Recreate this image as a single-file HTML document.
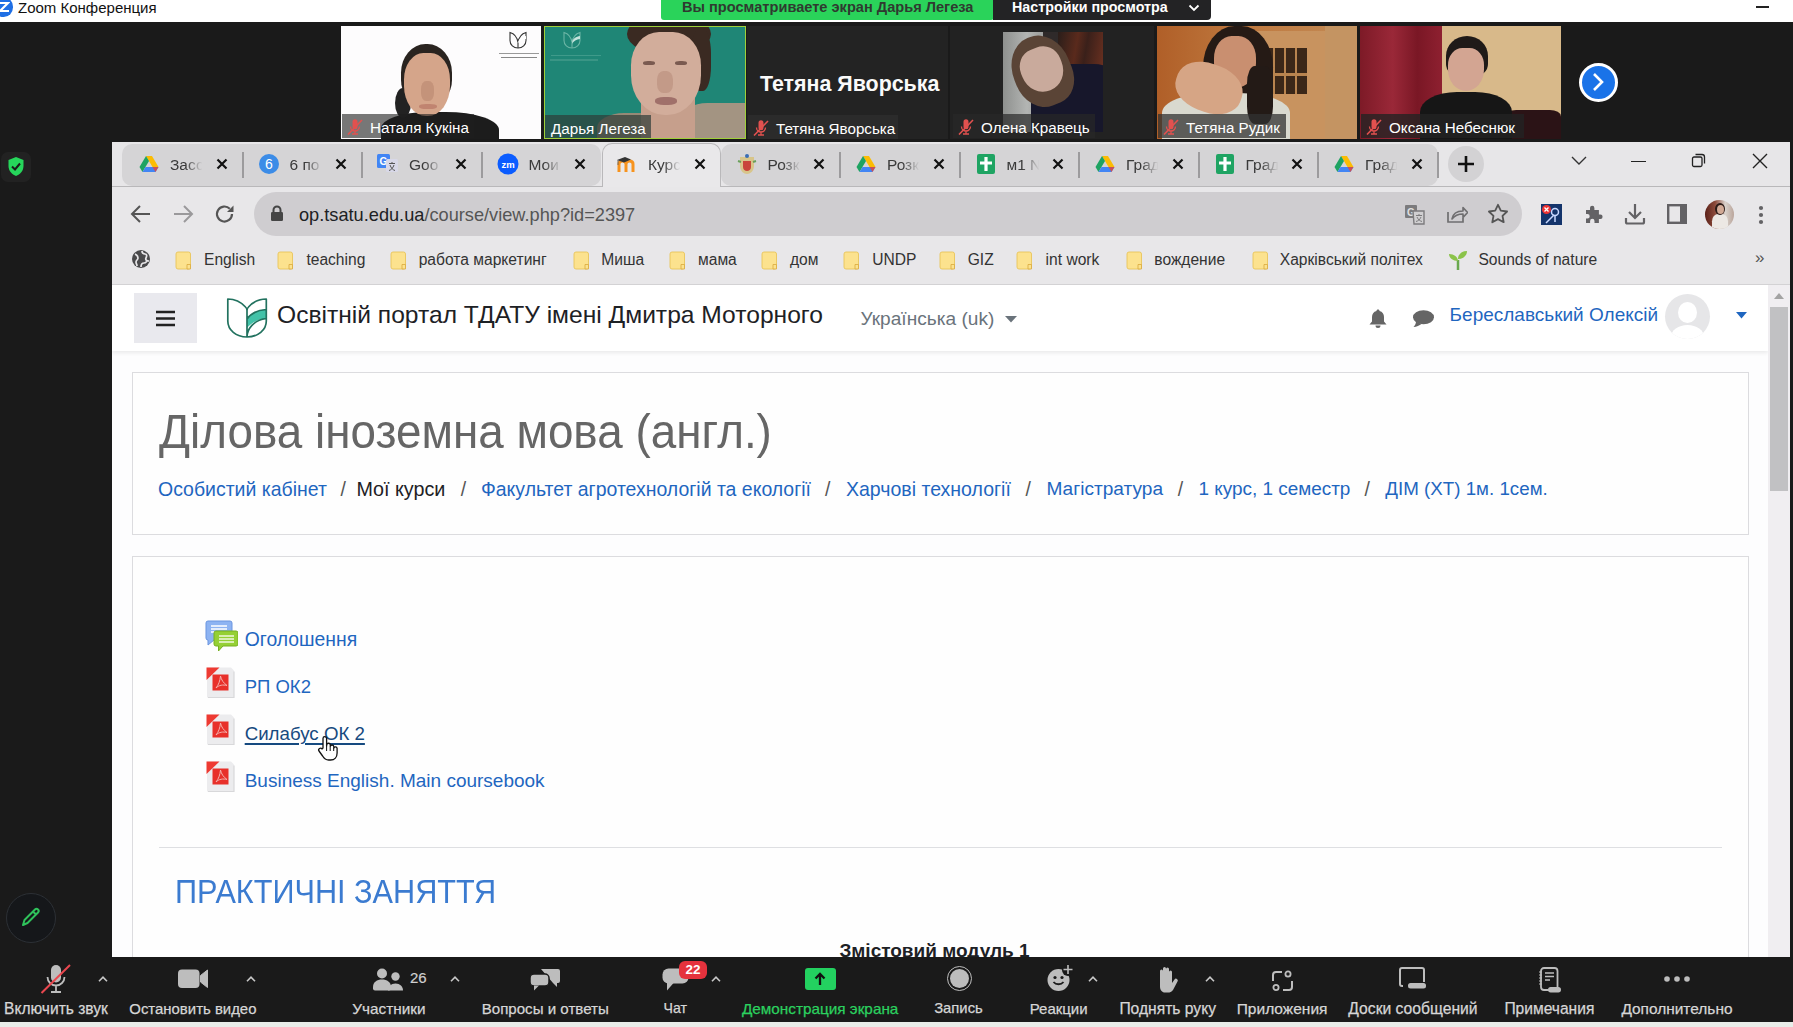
<!DOCTYPE html>
<html><head><meta charset="utf-8">
<style>
*{box-sizing:border-box;margin:0;padding:0}
html,body{width:1793px;height:1027px;overflow:hidden;background:#1a1a1a;font-family:"Liberation Sans",sans-serif}
.a{position:absolute}
.nw{white-space:nowrap}
/* title bar */
#title{left:0;top:0;width:1793px;height:22px;background:#fff}
/* thumbnails */
.tile{top:26px;height:113px;width:201px;overflow:hidden;background:#232323}
.badge{height:24px;color:#fff;font-size:15.2px;line-height:24px;padding:2px 6px 0 26px}
.badge.nomic{padding-left:6px}
.mic{left:5px;top:5px;width:16px;height:16px}
/* browser */
#browser{left:112px;top:142px;width:1678px;height:815px;background:#e8e7e9;overflow:hidden}
.tab{top:0;height:43px;width:120px}
.tabtxt{top:14px;font-size:15.5px;color:#3a3a3a;overflow:hidden;width:34px;white-space:nowrap}
.tabx{top:14px;width:16px;height:16px}
.sep{top:10px;width:2px;height:26px;background:#9c9b9d}
.bm{top:108.5px;font-size:15.6px;color:#333;white-space:nowrap}
.fold{top:109px;width:17px;height:18px}
/* moodle */
#page{left:0;top:143px;width:1678px;height:672px;background:linear-gradient(90deg,#fdfdfe 1656px,#f0eef1 1656px);overflow:hidden}
.link{color:#1f66c0}
.card{background:#fefefe;border:1px solid #dcdcdf}
/* zoom toolbar */
#tb{left:0;top:957px;width:1793px;height:65px;background:#1a1a1a}
.lbl{top:42px;font-size:15.5px;color:#d0d0d0;white-space:nowrap}
</style></head>
<body>
<div id="title" class="a">
  <div class="a" style="left:-6px;top:-3px;width:18.5px;height:19.5px;border-radius:50%;background:#1f6fe5"></div><svg class="a" style="left:-2px;top:1px" width="12" height="12" viewBox="0 0 12 12"><path d="M1 2h9L2 10h9" stroke="#fff" stroke-width="2.2" fill="none"/></svg>
  <div class="a nw" style="left:18px;top:-1px;font-size:15px;color:#111">Zoom Конференция</div>
  <div class="a" style="left:1756px;top:6px;width:13px;height:1.5px;background:#222"></div>
</div>
<div class="a" style="left:661px;top:0;width:333px;height:19.5px;background:#2ad35a;border-radius:0 0 3px 3px"></div>
<div class="a nw" style="left:682px;top:-1px;font-size:14.6px;font-weight:bold;color:#2f3a30">Вы просматриваете экран Дарья Легеза</div>
<div class="a" style="left:993px;top:0;width:218px;height:19.5px;background:#232325;border-radius:0 0 4px 0"></div>
<div class="a nw" style="left:1012px;top:-1px;font-size:14.3px;font-weight:bold;color:#fff">Настройки просмотра</div>
<svg class="a" style="left:1188px;top:4px" width="12" height="8" viewBox="0 0 12 8"><path d="M1.5 1.5l4.5 4.5 4.5-4.5" stroke="#fff" stroke-width="1.8" fill="none"/></svg>

<!-- THUMBS -->


<div class="a tile" style="left:341px;width:200px;background:#fdfcfd">
  <div class="a" style="left:40px;top:86px;width:118px;height:40px;border-radius:40% 45% 0 0;background:#1c1c1c;"></div>
  <div class="a" style="left:54px;top:62px;width:16px;height:30px;border-radius:50%;background:#222;"></div>
  <div class="a" style="left:60px;top:18px;width:51px;height:60px;border-radius:48% 48% 40% 40%;background:#2a2420;"></div>
  <div class="a" style="left:63px;top:27px;width:46px;height:63px;border-radius:42% 42% 48% 48%;background:#d5a58a;"></div>
  <div class="a" style="left:80px;top:55px;width:13px;height:20px;border-radius:40%;background:#c4937a;"></div>
  <div class="a" style="left:78px;top:78px;width:18px;height:5px;border-radius:40%;background:#c08470;"></div>
  <div class="a" style="left:167px;top:5px"><svg width="20" height="18" viewBox="0 0 20 18"><path d="M2 1.5c4 1 7 4 8 10 1-6 4-9 8-10v8c0 4.5-3.5 7.5-8 7.5S2 14 2 9.5z" fill="none" stroke="#333" stroke-width="1.1"/><path d="M10 11.5c1-4 4-6 8-6.5v3c-3.5.5-6.5 2-8 5z" fill="#fff"/><path d="M10 11.5V17" stroke="#333" stroke-width="1.1"/></svg></div>
  <div class="a" style="left:158px;top:27px;width:40px;height:1px;background:#999"></div>
  <div class="a" style="left:160px;top:31px;width:36px;height:1px;background:#888"></div>
  <div class="a badge nw" style="left:1px;top:88px;width:132px;padding-left:28px;background:rgba(30,30,30,.6)"><svg class="a mic" viewBox="0 0 16 16"><path d="M5.5 2.8a2.5 2.5 0 0 1 5 0v5a2.5 2.5 0 0 1-5 0z" fill="#e2514f"/><path d="M3.5 7.5a4.5 4.5 0 0 0 9 0M8 12v2.5M5 15h6" stroke="#e2514f" stroke-width="1.3" fill="none"/><path d="M1 15.5L15 1" stroke="#e2514f" stroke-width="1.6"/></svg>Наталя Кукіна</div>
</div>
<div class="a tile" style="left:544px;width:202px;background:#1f8676;border:1.5px solid #9fd03a">
  <div class="a" style="left:136px;top:76px;width:66px;height:40px;border-radius:40% 0 0 0;background:#a39482"></div>
  <div class="a" style="left:52px;top:86px;width:54px;height:30px;border-radius:50% 20% 0 0;background:#978976"></div>
  <div class="a" style="left:96px;top:66px;width:54px;height:50px;border-radius:10%;background:#c69f8c"></div>
  <div class="a" style="left:82px;top:-14px;width:84px;height:42px;border-radius:50%;background:#3a2a22"></div>
  <div class="a" style="left:146px;top:2px;width:20px;height:62px;border-radius:40%;background:#3a2a22"></div>
  <div class="a" style="left:86px;top:5px;width:70px;height:83px;border-radius:40% 40% 48% 48%;background:#d2ad9b"></div>
  <div class="a" style="left:112px;top:44px;width:16px;height:22px;border-radius:40%;background:#c39a88"></div>
  <div class="a" style="left:110px;top:70px;width:22px;height:8px;border-radius:40%;background:#a0706a"></div>
  <div class="a" style="left:98px;top:34px;width:12px;height:4px;border-radius:40%;background:#7a5a50"></div>
  <div class="a" style="left:130px;top:34px;width:12px;height:4px;border-radius:40%;background:#7a5a50"></div>
  <div class="a" style="left:17px;top:4px"><svg width="20" height="18" viewBox="0 0 20 18"><path d="M2 1.5c4 1 7 4 8 10 1-6 4-9 8-10v8c0 4.5-3.5 7.5-8 7.5S2 14 2 9.5z" fill="none" stroke="#6bb5a5" stroke-width="1.1"/><path d="M10 11.5c1-4 4-6 8-6.5v3c-3.5.5-6.5 2-8 5z" fill="#c5e3dc"/><path d="M10 11.5V17" stroke="#6bb5a5" stroke-width="1.1"/></svg></div>
  <div class="a" style="left:6px;top:28px;width:50px;height:1px;background:#3f9a8a"></div>
  <div class="a" style="left:5px;top:32px;width:48px;height:2px;background:#3a9585"></div>
  <div class="a badge nw" style="left:0px;top:88px;width:106px;padding-left:6px;background:rgba(45,60,55,.7)">Дарья Легеза</div>
</div>
<div class="a tile" style="left:747px;width:203px;background:#232323;border-right:2px solid #1a1a1a">
  <div class="a nw" style="left:13px;top:45.5px;font-size:21.4px;font-weight:bold;color:#fafafa">Тетяна Яворська</div>
  <div class="a badge nw" style="left:1px;top:89px;width:150px;padding-left:28px;background:#2b2b2b"><svg class="a mic" viewBox="0 0 16 16"><path d="M5.5 2.8a2.5 2.5 0 0 1 5 0v5a2.5 2.5 0 0 1-5 0z" fill="#e2514f"/><path d="M3.5 7.5a4.5 4.5 0 0 0 9 0M8 12v2.5M5 15h6" stroke="#e2514f" stroke-width="1.3" fill="none"/><path d="M1 15.5L15 1" stroke="#e2514f" stroke-width="1.6"/></svg>Тетяна Яворська</div>
</div>
<div class="a tile" style="left:950px;width:204px;background:#222">
  <div class="a" style="left:53px;top:6px;width:100px;height:100px;background:#2f2a2a;overflow:hidden">
    <div class="a" style="left:0;top:0;width:40px;height:100px;background:linear-gradient(90deg,#8e908e,#b3b5b3 60%,#9c9e9c)"></div>
    <div class="a" style="left:55px;top:0;width:45px;height:38px;background:linear-gradient(100deg,#2a1e1a,#5a2a1c 40%,#3a201a 60%,#6a3020)"></div>
    <div class="a" style="left:28px;top:32px;width:90px;height:80px;border-radius:45% 30% 0 0;background:#17172b"></div>
    <div class="a" style="left:10px;top:3px;width:58px;height:72px;border-radius:48% 48% 40% 45%;background:#5a4436;transform:rotate(-22deg)"></div>
    <div class="a" style="left:18px;top:15px;width:42px;height:45px;border-radius:42% 42% 50% 50%;background:#c9aa9c;transform:rotate(-22deg)"></div>
  </div>
  <div class="a badge nw" style="left:3px;top:88px;width:142px;padding-left:28px;background:rgba(40,40,40,.7)"><svg class="a mic" viewBox="0 0 16 16"><path d="M5.5 2.8a2.5 2.5 0 0 1 5 0v5a2.5 2.5 0 0 1-5 0z" fill="#e2514f"/><path d="M3.5 7.5a4.5 4.5 0 0 0 9 0M8 12v2.5M5 15h6" stroke="#e2514f" stroke-width="1.3" fill="none"/><path d="M1 15.5L15 1" stroke="#e2514f" stroke-width="1.6"/></svg>Олена Кравець</div>
</div>
<div class="a tile" style="left:1157px;width:200px;background:linear-gradient(90deg,#b05f28,#c07a40 45%,#c28a55)">
  <div class="a" style="left:100px;top:5px;width:68px;height:110px;background:#c8935f"></div>
  <div class="a" style="left:106px;top:22px;width:44px;height:46px;background:#3b2718;background-image:linear-gradient(90deg,transparent 22%,#b8844f 22% 27%,transparent 27% 47%,#b8844f 47% 52%,transparent 52% 72%,#b8844f 72% 77%,transparent 77%),linear-gradient(0deg,transparent 40%,#b8844f 40% 46%,transparent 46%)"></div>
  <div class="a" style="left:168px;top:0;width:32px;height:113px;background:#c49462"></div>
  <div class="a" style="left:46px;top:0px;width:70px;height:92px;border-radius:45% 45% 20% 20%;background:#251a15;"></div>
  <div class="a" style="left:57px;top:10px;width:42px;height:52px;border-radius:42% 42% 48% 48%;background:#c98f70;"></div>
  <div class="a" style="left:5px;top:67px;width:128px;height:50px;border-radius:40% 40% 0 0;background:#d9d9cf;"></div>
  <div class="a" style="left:18px;top:38px;width:68px;height:48px;border-radius:45%;background:#d6a585;transform:rotate(20deg)"></div>
  <div class="a" style="left:90px;top:40px;width:26px;height:58px;border-radius:30%;background:#231a16;"></div>
  <div class="a badge nw" style="left:1px;top:88px;width:128px;padding-left:28px;background:rgba(50,50,50,.75)"><svg class="a mic" viewBox="0 0 16 16"><path d="M5.5 2.8a2.5 2.5 0 0 1 5 0v5a2.5 2.5 0 0 1-5 0z" fill="#e2514f"/><path d="M3.5 7.5a4.5 4.5 0 0 0 9 0M8 12v2.5M5 15h6" stroke="#e2514f" stroke-width="1.3" fill="none"/><path d="M1 15.5L15 1" stroke="#e2514f" stroke-width="1.6"/></svg>Тетяна Рудик</div>
</div>
<div class="a tile" style="left:1360px;width:201px;background:#d8b98a">
  <div class="a" style="left:0;top:0;width:82px;height:113px;background:linear-gradient(90deg,#7d1a27,#9a2838 40%,#7a1725 70%,#8e2030)"></div>
  <div class="a" style="left:145px;top:84px;width:56px;height:32px;border-radius:20% 20% 0 0;background:#2b1316;"></div>
  <div class="a" style="left:60px;top:66px;width:92px;height:50px;border-radius:40% 40% 0 0;background:#161616;"></div>
  <div class="a" style="left:86px;top:10px;width:42px;height:40px;border-radius:50% 50% 30% 30%;background:#1f1a18;"></div>
  <div class="a" style="left:88px;top:22px;width:36px;height:43px;border-radius:40% 40% 50% 50%;background:#d3a592;"></div>
  <div class="a badge nw" style="left:1px;top:88px;width:163px;padding-left:28px;background:rgba(35,35,35,.8)"><svg class="a mic" viewBox="0 0 16 16"><path d="M5.5 2.8a2.5 2.5 0 0 1 5 0v5a2.5 2.5 0 0 1-5 0z" fill="#e2514f"/><path d="M3.5 7.5a4.5 4.5 0 0 0 9 0M8 12v2.5M5 15h6" stroke="#e2514f" stroke-width="1.3" fill="none"/><path d="M1 15.5L15 1" stroke="#e2514f" stroke-width="1.6"/></svg>Оксана Небеснюк</div>
</div>
<div class="a" style="left:1578.5px;top:62.5px;width:39px;height:39px;border-radius:50%;background:#1a73e8;border:3px solid #fff"></div>
<svg class="a" style="left:1590px;top:72px" width="16" height="20" viewBox="0 0 16 20"><path d="M4 2l8 8-8 8" stroke="#fff" stroke-width="2.6" fill="none"/></svg>
<div class="a" style="left:1px;top:152px;width:29.5px;height:30px;border-radius:7px;background:#222"></div>
<svg class="a" style="left:7px;top:156px" width="18" height="21" viewBox="0 0 18 21"><path d="M9 1l7.5 3v6c0 5-3.5 8.5-7.5 10C5 18.5 1.5 15 1.5 10V4z" fill="#26d65b"/><path d="M5 10.5l3 3 5-6" stroke="#1a1a1a" stroke-width="2" fill="none"/></svg>
<div class="a" style="left:6px;top:892.5px;width:50px;height:50px;border-radius:50%;background:#15171a;border:1.5px solid #2c3035"></div>
<svg class="a" style="left:19px;top:905px" width="24" height="24" viewBox="0 0 24 24"><path d="M4 20l1.5-5L16 4.5a2.1 2.1 0 0 1 3 3L8.5 18z M14 6.5l3 3" stroke="#2fc25b" stroke-width="2" fill="none" stroke-linejoin="round"/></svg>


<!-- BROWSER -->
<div id="browser" class="a">
  <div class="a" style="left:0;top:0;width:1678px;height:44px;background:#e7e6e8"></div>
<div class="a" style="left:10px;top:2px;width:479px;height:41.5px;background:#d5d4d6;border-radius:10px"></div><div class="a" style="left:609px;top:2px;width:717px;height:41.5px;background:#d5d4d6;border-radius:10px"></div><div class="a" style="left:490px;top:1px;width:118.5px;height:45px;background:#e9e8ea;border:1px solid #b9b8ba;border-bottom:none;border-radius:10px 10px 0 0"></div>
<div class="a sep" style="left:129.5px"></div>
<div class="a" style="left:26.0px;top:11px;width:22px;height:22px;display:flex;align-items:center;justify-content:center"><svg width="20" height="18" viewBox="0 0 20 18"><path d="M7 1h6l6.5 11h-6z" fill="#fbbc04"/><path d="M7 1L0.5 12l3 5L10 6z" fill="#1ea362"/><path d="M3.5 17h13l3-5h-13z" fill="#4285f4"/><path d="M16.5 17l3-5h-6z" fill="#ea4335" opacity=".8"/></svg></div>
<div class="a tabtxt" style="left:58.0px;-webkit-mask-image:linear-gradient(90deg,#000 45%,transparent 95%)">Засо</div>
<svg class="a tabx" style="left:101.5px" viewBox="0 0 16 16"><path d="M3.5 3.5l9 9M12.5 3.5l-9 9" stroke="#111" stroke-width="2.2"/></svg>
<div class="a sep" style="left:249.0px"></div>
<div class="a" style="left:145.5px;top:11px;width:22px;height:22px;display:flex;align-items:center;justify-content:center"><svg width="20" height="20" viewBox="0 0 20 20"><circle cx="10" cy="10" r="10" fill="#3c8ce7"/><text x="10" y="15" text-anchor="middle" font-family="Liberation Sans" font-size="14" fill="#fff">6</text></svg></div>
<div class="a tabtxt" style="left:177.5px;-webkit-mask-image:linear-gradient(90deg,#000 45%,transparent 95%)">6 по</div>
<svg class="a tabx" style="left:221.0px" viewBox="0 0 16 16"><path d="M3.5 3.5l9 9M12.5 3.5l-9 9" stroke="#111" stroke-width="2.2"/></svg>
<div class="a sep" style="left:368.5px"></div>
<div class="a" style="left:265.0px;top:11px;width:22px;height:22px;display:flex;align-items:center;justify-content:center"><svg width="22" height="20" viewBox="0 0 22 20"><rect x="0" y="0" width="13" height="14" rx="1.5" fill="#4285f4"/><text x="6.5" y="11" text-anchor="middle" font-family="Liberation Sans" font-weight="bold" font-size="10" fill="#fff">G</text><rect x="9" y="5" width="12" height="13" rx="1.5" fill="#d8d8e8"/><path d="M12 9.5h6M15 8v1.5M13 11c1 3 3 5 5 5.5M17 11c-1 3-3 5-5 5.5" stroke="#555" stroke-width="1" fill="none"/></svg></div>
<div class="a tabtxt" style="left:297.0px;-webkit-mask-image:linear-gradient(90deg,#000 45%,transparent 95%)">Goo</div>
<svg class="a tabx" style="left:340.5px" viewBox="0 0 16 16"><path d="M3.5 3.5l9 9M12.5 3.5l-9 9" stroke="#111" stroke-width="2.2"/></svg>
<div class="a" style="left:384.5px;top:11px;width:22px;height:22px;display:flex;align-items:center;justify-content:center"><svg width="22" height="22" viewBox="0 0 22 22"><circle cx="11" cy="11" r="10.5" fill="#0b5cff"/><text x="11" y="14.5" text-anchor="middle" font-family="Liberation Sans" font-weight="bold" font-size="9.5" fill="#fff">zm</text></svg></div>
<div class="a tabtxt" style="left:416.5px;-webkit-mask-image:linear-gradient(90deg,#000 45%,transparent 95%)">Мои</div>
<svg class="a tabx" style="left:460.0px" viewBox="0 0 16 16"><path d="M3.5 3.5l9 9M12.5 3.5l-9 9" stroke="#111" stroke-width="2.2"/></svg>

<div class="a" style="left:504.0px;top:11px;width:22px;height:22px;display:flex;align-items:center;justify-content:center"><svg width="22" height="18" viewBox="0 0 22 18"><path d="M3 17V9c0-2 1.5-3 3.5-3S10 7 10 9v8M10 9c0-2 1.5-3 3.5-3S17 7 17 9v8" stroke="#f7931e" stroke-width="3" fill="none"/><path d="M1 5l8-3 6 2.5-7 3z" fill="#333"/><path d="M2 5v5" stroke="#555" stroke-width=".8"/></svg></div>
<div class="a tabtxt" style="left:536.0px;-webkit-mask-image:linear-gradient(90deg,#000 45%,transparent 95%)">Курс</div>
<svg class="a tabx" style="left:579.5px" viewBox="0 0 16 16"><path d="M3.5 3.5l9 9M12.5 3.5l-9 9" stroke="#111" stroke-width="2.2"/></svg>
<div class="a sep" style="left:727.0px"></div>
<div class="a" style="left:623.5px;top:11px;width:22px;height:22px;display:flex;align-items:center;justify-content:center"><svg width="20" height="22" viewBox="0 0 20 22"><path d="M3 4h14v9c0 5-4 8-7 8s-7-3-7-8z" fill="#d8c58a"/><path d="M6 8h8v6c0 2.5-2 4-4 4s-4-1.5-4-4z" fill="#c9463b"/><circle cx="10" cy="3" r="2" fill="#3a6db3"/><path d="M1 8l3 1M19 8l-3 1" stroke="#6aa05a" stroke-width="2"/></svg></div>
<div class="a tabtxt" style="left:655.5px;-webkit-mask-image:linear-gradient(90deg,#000 45%,transparent 95%)">Розк</div>
<svg class="a tabx" style="left:699.0px" viewBox="0 0 16 16"><path d="M3.5 3.5l9 9M12.5 3.5l-9 9" stroke="#111" stroke-width="2.2"/></svg>
<div class="a sep" style="left:846.5px"></div>
<div class="a" style="left:743.0px;top:11px;width:22px;height:22px;display:flex;align-items:center;justify-content:center"><svg width="20" height="18" viewBox="0 0 20 18"><path d="M7 1h6l6.5 11h-6z" fill="#fbbc04"/><path d="M7 1L0.5 12l3 5L10 6z" fill="#1ea362"/><path d="M3.5 17h13l3-5h-13z" fill="#4285f4"/><path d="M16.5 17l3-5h-6z" fill="#ea4335" opacity=".8"/></svg></div>
<div class="a tabtxt" style="left:775.0px;-webkit-mask-image:linear-gradient(90deg,#000 45%,transparent 95%)">Розк</div>
<svg class="a tabx" style="left:818.5px" viewBox="0 0 16 16"><path d="M3.5 3.5l9 9M12.5 3.5l-9 9" stroke="#111" stroke-width="2.2"/></svg>
<div class="a sep" style="left:966.0px"></div>
<div class="a" style="left:862.5px;top:11px;width:22px;height:22px;display:flex;align-items:center;justify-content:center"><svg width="20" height="22" viewBox="0 0 20 22"><rect x="1" y="1" width="18" height="20" rx="2" fill="#1fa463"/><path d="M10 4v14M4 10h12" stroke="#fff" stroke-width="3.2"/></svg></div>
<div class="a tabtxt" style="left:894.5px;-webkit-mask-image:linear-gradient(90deg,#000 45%,transparent 95%)">м1 N</div>
<svg class="a tabx" style="left:938.0px" viewBox="0 0 16 16"><path d="M3.5 3.5l9 9M12.5 3.5l-9 9" stroke="#111" stroke-width="2.2"/></svg>
<div class="a sep" style="left:1085.5px"></div>
<div class="a" style="left:982.0px;top:11px;width:22px;height:22px;display:flex;align-items:center;justify-content:center"><svg width="20" height="18" viewBox="0 0 20 18"><path d="M7 1h6l6.5 11h-6z" fill="#fbbc04"/><path d="M7 1L0.5 12l3 5L10 6z" fill="#1ea362"/><path d="M3.5 17h13l3-5h-13z" fill="#4285f4"/><path d="M16.5 17l3-5h-6z" fill="#ea4335" opacity=".8"/></svg></div>
<div class="a tabtxt" style="left:1014.0px;-webkit-mask-image:linear-gradient(90deg,#000 45%,transparent 95%)">Град</div>
<svg class="a tabx" style="left:1057.5px" viewBox="0 0 16 16"><path d="M3.5 3.5l9 9M12.5 3.5l-9 9" stroke="#111" stroke-width="2.2"/></svg>
<div class="a sep" style="left:1205.0px"></div>
<div class="a" style="left:1101.5px;top:11px;width:22px;height:22px;display:flex;align-items:center;justify-content:center"><svg width="20" height="22" viewBox="0 0 20 22"><rect x="1" y="1" width="18" height="20" rx="2" fill="#1fa463"/><path d="M10 4v14M4 10h12" stroke="#fff" stroke-width="3.2"/></svg></div>
<div class="a tabtxt" style="left:1133.5px;-webkit-mask-image:linear-gradient(90deg,#000 45%,transparent 95%)">Град</div>
<svg class="a tabx" style="left:1177.0px" viewBox="0 0 16 16"><path d="M3.5 3.5l9 9M12.5 3.5l-9 9" stroke="#111" stroke-width="2.2"/></svg>
<div class="a sep" style="left:1324.5px"></div>
<div class="a" style="left:1221.0px;top:11px;width:22px;height:22px;display:flex;align-items:center;justify-content:center"><svg width="20" height="18" viewBox="0 0 20 18"><path d="M7 1h6l6.5 11h-6z" fill="#fbbc04"/><path d="M7 1L0.5 12l3 5L10 6z" fill="#1ea362"/><path d="M3.5 17h13l3-5h-13z" fill="#4285f4"/><path d="M16.5 17l3-5h-6z" fill="#ea4335" opacity=".8"/></svg></div>
<div class="a tabtxt" style="left:1253.0px;-webkit-mask-image:linear-gradient(90deg,#000 45%,transparent 95%)">Град</div>
<svg class="a tabx" style="left:1296.5px" viewBox="0 0 16 16"><path d="M3.5 3.5l9 9M12.5 3.5l-9 9" stroke="#111" stroke-width="2.2"/></svg>
<div class="a" style="left:1336px;top:4px;width:36px;height:36px;border-radius:50%;background:#d3d2d4"></div>
<svg class="a" style="left:1344px;top:12px" width="20" height="20" viewBox="0 0 20 20"><path d="M10 2v16M2 10h16" stroke="#111" stroke-width="2.6"/></svg>
<svg class="a" style="left:1459px;top:14px" width="16" height="10" viewBox="0 0 16 10"><path d="M1 1l7 7 7-7" stroke="#333" stroke-width="1.4" fill="none"/></svg>
<div class="a" style="left:1519px;top:18.5px;width:15px;height:1.4px;background:#222"></div>
<svg class="a" style="left:1579px;top:11px" width="15" height="15" viewBox="0 0 15 15"><rect x="1.5" y="4" width="9.5" height="9.5" rx="1.5" stroke="#222" stroke-width="1.3" fill="none"/><path d="M4.5 1.5h6.5a2.5 2.5 0 0 1 2.5 2.5v6.5" stroke="#222" stroke-width="1.3" fill="none"/></svg>
<svg class="a" style="left:1640px;top:11px" width="16" height="16" viewBox="0 0 16 16"><path d="M1 1l14 14M15 1L1 15" stroke="#222" stroke-width="1.4"/></svg>
<div class="a" style="left:0;top:43.5px;width:491px;height:1.5px;background:#b9b8ba"></div><div class="a" style="left:607.5px;top:43.5px;width:1071px;height:1.5px;background:#b9b8ba"></div>
  <div class="a" style="left:0;top:44.5px;width:1678px;height:98.5px;background:#e8e7e9"></div>
<svg class="a" style="left:18px;top:62px" width="22" height="20" viewBox="0 0 22 20"><path d="M20 10H3M10 2L2 10l8 8" stroke="#555" stroke-width="2" fill="none"/></svg>
<svg class="a" style="left:60px;top:62px" width="22" height="20" viewBox="0 0 22 20"><path d="M2 10h17M12 2l8 8-8 8" stroke="#9a999b" stroke-width="2" fill="none"/></svg>
<svg class="a" style="left:102px;top:61px" width="22" height="22" viewBox="0 0 22 22"><path d="M18 11a7.5 7.5 0 1 1-2.2-5.3" stroke="#555" stroke-width="2.2" fill="none"/><path d="M19.5 2.5v6.5h-6.5z" fill="#555"/></svg>
<div class="a" style="left:141.6px;top:50px;width:1268px;height:44px;border-radius:22px;background:#cfcdd0"></div>
<svg class="a" style="left:158px;top:63px" width="14" height="17" viewBox="0 0 14 17"><path d="M3.5 7V5a3.5 3.5 0 0 1 7 0v2" stroke="#454545" stroke-width="2" fill="none"/><rect x="1" y="7" width="12" height="9" rx="1.2" fill="#454545"/></svg>
<div class="a nw" style="left:187px;top:62.5px;font-size:18.2px;color:#202124">op.tsatu.edu.ua<span style="color:#555">/course/view.php?id=2397</span></div>
<svg class="a" style="left:1292px;top:62px" width="22" height="22" viewBox="0 0 22 22"><rect x="1" y="1" width="12" height="13" rx="1" fill="#7c7b7d"/><text x="7" y="11.5" text-anchor="middle" font-family="Liberation Sans" font-weight="bold" font-size="10" fill="#e0e0e0">G</text><path d="M9 7h11v13H10z" stroke="#7c7b7d" stroke-width="1.4" fill="#d0cfd1"/><path d="M12 11.5h6M15 10v1.5M13 13c1 2.5 3 4 5 4.5M17 13c-1 2.5-3 4-5 4.5" stroke="#7c7b7d" stroke-width="1" fill="none"/></svg>
<svg class="a" style="left:1334px;top:62px" width="22" height="20" viewBox="0 0 22 20"><path d="M2 8v10h15v-4" stroke="#6f6e70" stroke-width="1.7" fill="none"/><path d="M6 15c1-6 5-8 11-8V3.5l4.5 5-4.5 5V10c-4 0-8 1-11 5z" stroke="#6f6e70" stroke-width="1.6" fill="none" stroke-linejoin="round"/></svg>
<svg class="a" style="left:1375px;top:61px" width="22" height="22" viewBox="0 0 22 22"><path d="M11 1.8l2.8 5.9 6.3.8-4.6 4.4 1.2 6.3L11 16.1l-5.7 3.1 1.2-6.3L1.9 8.5l6.3-.8z" stroke="#555" stroke-width="1.8" fill="none" stroke-linejoin="round"/></svg>
<div class="a" style="left:1429px;top:62px;width:21px;height:21px;background:#14346b"></div>
<svg class="a" style="left:1429px;top:62px" width="21" height="21" viewBox="0 0 21 21"><circle cx="14" cy="8" r="3.5" stroke="#c8d8ff" stroke-width="1.5" fill="none"/><path d="M13 11l-8 8M14 12v6" stroke="#c8d8ff" stroke-width="1.5"/><circle cx="5.5" cy="5.5" r="4.5" fill="#e33"/><path d="M3.5 3.5l4 4M7.5 3.5l-4 4" stroke="#fff" stroke-width="1.3"/></svg>
<svg class="a" style="left:1471px;top:62px" width="21" height="21" viewBox="0 0 21 21"><path d="M3 6h4V4a2.2 2.2 0 0 1 4.4 0v2h4.5v4.5h1.5a2.2 2.2 0 0 1 0 4.4h-1.5V19H11.5v-2a2.2 2.2 0 0 0-4.4 0v2H3v-4.5h1.5a2.2 2.2 0 0 0 0-4.4H3z" fill="#636265"/></svg>
<svg class="a" style="left:1512px;top:60px" width="22" height="24" viewBox="0 0 22 24"><path d="M11 2v14M5 10l6 6 6-6" stroke="#636265" stroke-width="2.2" fill="none"/><path d="M2 16v4a1.5 1.5 0 0 0 1.5 1.5h15a1.5 1.5 0 0 0 1.5-1.5v-4" stroke="#636265" stroke-width="2.2" fill="none"/></svg>
<svg class="a" style="left:1555px;top:62px" width="20" height="20" viewBox="0 0 20 20"><rect x="1.2" y="1.2" width="17.6" height="17.6" stroke="#636265" stroke-width="2.4" fill="none"/><rect x="13" y="1" width="6" height="18" fill="#636265"/></svg>
<div class="a" style="left:1593px;top:58px;width:29px;height:29px;border-radius:50%;overflow:hidden;background:linear-gradient(90deg,#5a2018,#8c4a3a 35%,#d9d2cc 70%,#b9a49a)"><div class="a" style="left:7px;top:14px;width:16px;height:18px;border-radius:40% 40% 0 0;background:#ece8e4"></div><div class="a" style="left:10px;top:3px;width:10px;height:12px;border-radius:50%;background:#2a1a16"></div><div class="a" style="left:11.5px;top:5px;width:7px;height:9px;border-radius:50%;background:#d2aa96"></div></div>
<svg class="a" style="left:1645px;top:62px" width="8" height="22" viewBox="0 0 8 22"><circle cx="4" cy="4" r="2.1" fill="#636265"/><circle cx="4" cy="11" r="2.1" fill="#636265"/><circle cx="4" cy="18" r="2.1" fill="#636265"/></svg>
<svg class="a" style="left:18.5px;top:107px" width="20" height="20" viewBox="0 0 20 20"><circle cx="10" cy="10" r="9" fill="#4a4a4c"/><path d="M4 5c2 1 3 2 3 4s-2 2-2 4 1 2 1 4M11 2c0 2 1 3 3 3s2 2 1 4 1 3 3 3M10 18c0-2 1-4 3-4s2-1 3-2" stroke="#e8e7e9" stroke-width="1.7" fill="none"/></svg>
<div class="a" style="left:62.69999999999999px;top:109px"><svg width="17" height="19" viewBox="0 0 17 19"><rect x="1" y="1" width="14.5" height="17" rx="2" fill="#fce28e" stroke="#e9c45a" stroke-width=".9"/><path d="M12 13.5h3.5v4.5H12z" fill="#fce28e" stroke="#d9a93c" stroke-width=".8"/></svg></div>
<div class="a bm" style="left:92px">English</div>
<div class="a" style="left:164.5px;top:109px"><svg width="17" height="19" viewBox="0 0 17 19"><rect x="1" y="1" width="14.5" height="17" rx="2" fill="#fce28e" stroke="#e9c45a" stroke-width=".9"/><path d="M12 13.5h3.5v4.5H12z" fill="#fce28e" stroke="#d9a93c" stroke-width=".8"/></svg></div>
<div class="a bm" style="left:194.39999999999998px">teaching</div>
<div class="a" style="left:277.5px;top:109px"><svg width="17" height="19" viewBox="0 0 17 19"><rect x="1" y="1" width="14.5" height="17" rx="2" fill="#fce28e" stroke="#e9c45a" stroke-width=".9"/><path d="M12 13.5h3.5v4.5H12z" fill="#fce28e" stroke="#d9a93c" stroke-width=".8"/></svg></div>
<div class="a bm" style="left:306.7px">работа маркетинг</div>
<div class="a" style="left:460.5px;top:109px"><svg width="17" height="19" viewBox="0 0 17 19"><rect x="1" y="1" width="14.5" height="17" rx="2" fill="#fce28e" stroke="#e9c45a" stroke-width=".9"/><path d="M12 13.5h3.5v4.5H12z" fill="#fce28e" stroke="#d9a93c" stroke-width=".8"/></svg></div>
<div class="a bm" style="left:489.29999999999995px">Миша</div>
<div class="a" style="left:557.3px;top:109px"><svg width="17" height="19" viewBox="0 0 17 19"><rect x="1" y="1" width="14.5" height="17" rx="2" fill="#fce28e" stroke="#e9c45a" stroke-width=".9"/><path d="M12 13.5h3.5v4.5H12z" fill="#fce28e" stroke="#d9a93c" stroke-width=".8"/></svg></div>
<div class="a bm" style="left:586px">мама</div>
<div class="a" style="left:648.8px;top:109px"><svg width="17" height="19" viewBox="0 0 17 19"><rect x="1" y="1" width="14.5" height="17" rx="2" fill="#fce28e" stroke="#e9c45a" stroke-width=".9"/><path d="M12 13.5h3.5v4.5H12z" fill="#fce28e" stroke="#d9a93c" stroke-width=".8"/></svg></div>
<div class="a bm" style="left:678px">дом</div>
<div class="a" style="left:731px;top:109px"><svg width="17" height="19" viewBox="0 0 17 19"><rect x="1" y="1" width="14.5" height="17" rx="2" fill="#fce28e" stroke="#e9c45a" stroke-width=".9"/><path d="M12 13.5h3.5v4.5H12z" fill="#fce28e" stroke="#d9a93c" stroke-width=".8"/></svg></div>
<div class="a bm" style="left:760.3px">UNDP</div>
<div class="a" style="left:827.3px;top:109px"><svg width="17" height="19" viewBox="0 0 17 19"><rect x="1" y="1" width="14.5" height="17" rx="2" fill="#fce28e" stroke="#e9c45a" stroke-width=".9"/><path d="M12 13.5h3.5v4.5H12z" fill="#fce28e" stroke="#d9a93c" stroke-width=".8"/></svg></div>
<div class="a bm" style="left:855.7px">GIZ</div>
<div class="a" style="left:904px;top:109px"><svg width="17" height="19" viewBox="0 0 17 19"><rect x="1" y="1" width="14.5" height="17" rx="2" fill="#fce28e" stroke="#e9c45a" stroke-width=".9"/><path d="M12 13.5h3.5v4.5H12z" fill="#fce28e" stroke="#d9a93c" stroke-width=".8"/></svg></div>
<div class="a bm" style="left:933.5999999999999px">int work</div>
<div class="a" style="left:1013.5999999999999px;top:109px"><svg width="17" height="19" viewBox="0 0 17 19"><rect x="1" y="1" width="14.5" height="17" rx="2" fill="#fce28e" stroke="#e9c45a" stroke-width=".9"/><path d="M12 13.5h3.5v4.5H12z" fill="#fce28e" stroke="#d9a93c" stroke-width=".8"/></svg></div>
<div class="a bm" style="left:1042.3px">вождение</div>
<div class="a" style="left:1140px;top:109px"><svg width="17" height="19" viewBox="0 0 17 19"><rect x="1" y="1" width="14.5" height="17" rx="2" fill="#fce28e" stroke="#e9c45a" stroke-width=".9"/><path d="M12 13.5h3.5v4.5H12z" fill="#fce28e" stroke="#d9a93c" stroke-width=".8"/></svg></div>
<div class="a bm" style="left:1167.8px">Харківський політех</div>
<svg class="a" style="left:1335px;top:107px" width="22" height="22" viewBox="0 0 22 22"><path d="M11 21V11" stroke="#6aa84f" stroke-width="2.5"/><path d="M11 12C6 12 2 9 2 5c5 0 9 3 9 7zM11 10c0-5 4-8 9-8 0 5-4 8-9 8z" fill="#8bc34a"/></svg>
<div class="a bm" style="left:1366.4px">Sounds of nature</div>
<div class="a bm" style="left:1643px;top:106px;font-size:17px;color:#555">»</div>
<div class="a" style="left:0;top:142px;width:1678px;height:1px;background:#d3d2d4"></div>
  <div id="page" class="a"><div class="a" style="left:0;top:0;width:1656px;height:66px;background:#fff;box-shadow:0 2px 4px rgba(0,0,0,.08)"></div>
<div class="a" style="left:21.599999999999994px;top:7.699999999999989px;width:63px;height:50px;background:#e9e9ee"></div>
<svg class="a" style="left:44px;top:25px" width="19" height="17" viewBox="0 0 19 17"><path d="M0 2h19M0 8.5h19M0 15h19" stroke="#222" stroke-width="2.6"/></svg>
<svg class="a" style="left:114px;top:13px" width="42" height="40" viewBox="0 0 42 40"><path d="M21 21C25 15.5 31 12 40.3 11.5V20.5C31 21 25 25 21 30z" fill="#43c2a8"/><path d="M1.8 1C8 1 15 4 19.5 9 20.5 10 21 11.5 21 12.5 21 11.5 21.5 10 22.5 9 27 4 34 1 40.3 1V23C40.3 32 32 39 21 39 10 39 1.8 32 1.8 23z M21 12.5V39 M21 21C25 15.5 31 12 40.3 11.5 M21 39C21 32 27 22 40.3 20.5" fill="none" stroke="#22725f" stroke-width="1.7" stroke-linejoin="round"/></svg>
<div class="a nw" style="left:165px;top:16px;font-size:24.6px;color:#1d2125">Освітній портал ТДАТУ імені Дмитра Моторного</div>
<div class="a nw" style="left:748.5px;top:22.5px;font-size:19.1px;color:#6a737b">Українська (uk)</div>
<svg class="a" style="left:893px;top:31px" width="12" height="7" viewBox="0 0 12 7"><path d="M0 0h12L6 6.5z" fill="#6a737b"/></svg>
<svg class="a" style="left:1256px;top:22.600000000000023px" width="20" height="20" viewBox="0 0 20 20"><path d="M10 1.5c.9 0 1.5.6 1.5 1.4C14.5 3.6 16 6 16 9v4.5l2.5 3H1.5l2.5-3V9c0-3 1.5-5.4 4.5-6.1 0-.8.6-1.4 1.5-1.4zM7.5 17.5h5a2.5 2.5 0 0 1-5 0z" fill="#656565"/></svg>
<svg class="a" style="left:1300px;top:25px" width="23" height="18" viewBox="0 0 23 18"><ellipse cx="11.5" cy="7.2" rx="10.5" ry="7" fill="#656565"/><path d="M4 11.5c0 2-1 4-2.5 5.5 3 0 6-1.5 8-3z" fill="#656565"/></svg>
<div class="a nw link" style="left:1337.6px;top:19px;font-size:19px">Береславський Олексій</div>
<div class="a" style="left:1553px;top:9px;width:45px;height:45px;border-radius:50%;background:#e6e6e8;overflow:hidden"><div class="a" style="left:13px;top:8px;width:19px;height:21px;border-radius:50%;background:#fff"></div><div class="a" style="left:6px;top:31px;width:33px;height:24px;border-radius:50% 50% 0 0;background:#fff"></div></div>
<svg class="a" style="left:1624px;top:26.5px" width="11" height="7" viewBox="0 0 11 7"><path d="M0 0h11L5.5 6.5z" fill="#1f66c0"/></svg>
<div class="a card" style="left:20px;top:87px;width:1617px;height:163px"></div>
<div class="a nw" style="left:47px;top:118px;font-size:49px;color:#666;transform-origin:0 0;transform:scaleX(0.935)">Ділова іноземна мова (англ.)</div>
<div class="a nw" style="left:46px;top:193px;font-size:19.48px;color:#1f66c0">Особистий кабінет</div>
<div class="a nw" style="left:228.5px;top:193px;font-size:19.4px;color:#555">/</div>
<div class="a nw" style="left:244.39999999999998px;top:193px;font-size:19.74px;color:#1d2125">Мої курси</div>
<div class="a nw" style="left:348.7px;top:193px;font-size:19.4px;color:#555">/</div>
<div class="a nw" style="left:369px;top:193px;font-size:19.47px;color:#1f66c0">Факультет агротехнологій та екології</div>
<div class="a nw" style="left:713px;top:193px;font-size:19.4px;color:#555">/</div>
<div class="a nw" style="left:734px;top:193px;font-size:19.53px;color:#1f66c0">Харчові технології</div>
<div class="a nw" style="left:913.5px;top:193px;font-size:19.4px;color:#555">/</div>
<div class="a nw" style="left:934.5px;top:193px;font-size:19.08px;color:#1f66c0">Магістратура</div>
<div class="a nw" style="left:1065.7px;top:193px;font-size:19.4px;color:#555">/</div>
<div class="a nw" style="left:1086.4px;top:193px;font-size:18.93px;color:#1f66c0">1 курс, 1 семестр</div>
<div class="a nw" style="left:1252.6px;top:193px;font-size:19.4px;color:#555">/</div>
<div class="a nw" style="left:1273.3px;top:193px;font-size:18.75px;color:#1f66c0">ДІМ (ХТ) 1м. 1сем.</div>
<div class="a card" style="left:20px;top:271px;width:1617px;height:500px"></div>
<div class="a" style="left:92.5px;top:335px"><svg width="33" height="32" viewBox="0 0 33 32"><path d="M3 1h22a2 2 0 0 1 2 2v15a2 2 0 0 1-2 2H9l-6 5v-5a2 2 0 0 1-2-2V3a2 2 0 0 1 2-2z" fill="#8db3f2" stroke="#6a95e0" stroke-width="1"/><path d="M6 6h16M6 9h16M6 12h10" stroke="#fff" stroke-width="1.4"/><path d="M11 11h20a2 2 0 0 1 2 2v11a2 2 0 0 1-2 2H18l-4.5 5v-5H11a2 2 0 0 1-2-2V13a2 2 0 0 1 2-2z" fill="#95d035" stroke="#76b020" stroke-width="1"/><path d="M14 16h15M14 19h15M14 22h15" stroke="#f0f8e0" stroke-width="1.3"/></svg></div>
<div class="a nw link" style="left:132.7px;top:343.20000000000005px;font-size:19.38px;">Оголошення</div>
<div class="a" style="left:92.5px;top:382px"><svg width="30" height="32" viewBox="0 0 30 32"><path d="M2 0.5h24l3 3v27H2z" fill="#ececee"/><path d="M3 30.5h26v-26" stroke="#d8d8da" stroke-width="1.2" fill="none"/><rect x="7.5" y="7.5" width="16" height="16" fill="#e8302a"/><path d="M1.5 0.5h13L1.5 13z" fill="#ee3a32"/><path d="M11 21c2.5-3 4-7 4.5-12 .8 4 3 7 6.5 9.5-4-1-8-.5-11 2.5z" stroke="#f4b0ac" stroke-width="1" fill="none"/></svg></div>
<div class="a nw link" style="left:132.7px;top:390.5px;font-size:18.5px;">РП ОК2</div>
<div class="a" style="left:92.5px;top:429px"><svg width="30" height="32" viewBox="0 0 30 32"><path d="M2 0.5h24l3 3v27H2z" fill="#ececee"/><path d="M3 30.5h26v-26" stroke="#d8d8da" stroke-width="1.2" fill="none"/><rect x="7.5" y="7.5" width="16" height="16" fill="#e8302a"/><path d="M1.5 0.5h13L1.5 13z" fill="#ee3a32"/><path d="M11 21c2.5-3 4-7 4.5-12 .8 4 3 7 6.5 9.5-4-1-8-.5-11 2.5z" stroke="#f4b0ac" stroke-width="1" fill="none"/></svg></div>
<div class="a nw link" style="left:132.7px;top:438.0px;font-size:18.7px;color:#164a80;text-decoration:underline;text-underline-offset:3px;text-decoration-thickness:1.6px">Силабус ОК 2</div>
<div class="a" style="left:92.5px;top:476px"><svg width="30" height="32" viewBox="0 0 30 32"><path d="M2 0.5h24l3 3v27H2z" fill="#ececee"/><path d="M3 30.5h26v-26" stroke="#d8d8da" stroke-width="1.2" fill="none"/><rect x="7.5" y="7.5" width="16" height="16" fill="#e8302a"/><path d="M1.5 0.5h13L1.5 13z" fill="#ee3a32"/><path d="M11 21c2.5-3 4-7 4.5-12 .8 4 3 7 6.5 9.5-4-1-8-.5-11 2.5z" stroke="#f4b0ac" stroke-width="1" fill="none"/></svg></div>
<div class="a nw link" style="left:132.7px;top:484.9px;font-size:19.0px;">Business English. Main coursebook</div>
<svg class="a" style="left:204px;top:450px" width="22" height="26" viewBox="0 0 22 26"><path d="M7 13V3.5a1.8 1.8 0 0 1 3.6 0V11l.2-1.5a1.8 1.8 0 0 1 3.5.3v1.5a1.8 1.8 0 0 1 3.5.2v1.5a1.7 1.7 0 0 1 3.3.3V18c0 4-2.5 7-6.5 7h-2c-3 0-4.5-1.5-6-4L3 16a1.8 1.8 0 0 1 3-2z" fill="#fff" stroke="#111" stroke-width="1.3" stroke-linejoin="round"/><path d="M10.6 11v5M14.2 11.5v4.5M17.7 13v3" stroke="#111" stroke-width="1"/></svg>
<div class="a" style="left:47px;top:562px;width:1563px;height:1px;background:#dedfe2"></div>
<div class="a nw" style="left:62.5px;top:587.5px;font-size:33.5px;color:#3b7bd0;transform-origin:0 0;transform:scaleX(0.915)">ПРАКТИЧНІ ЗАНЯТТЯ</div>
<div class="a nw" style="left:727.4px;top:655px;font-size:19px;font-weight:bold;color:#1d2125">Змістовий модуль 1</div>
<div class="a" style="left:1656px;top:0;width:22px;height:672px;background:#f0eef1"></div>
<svg class="a" style="left:1662px;top:8px" width="10" height="6" viewBox="0 0 10 6"><path d="M0 6L5 0l5 6z" fill="#a3a3a3"/></svg>
<div class="a" style="left:1658.4px;top:22px;width:17.6px;height:183.5px;background:#c1c1c3"></div></div>
</div>

<!-- ZOOM TOOLBAR -->
<div id="tb" class="a"><div class="a nw" style="left:4px;top:42.5px;font-size:15.59px;color:#d6d6d6;-webkit-text-stroke:0.25px #d6d6d6">Включить звук</div>
<div class="a nw" style="left:129.3px;top:42.5px;font-size:14.93px;color:#d6d6d6;-webkit-text-stroke:0.25px #d6d6d6">Остановить видео</div>
<div class="a nw" style="left:352.3px;top:42.5px;font-size:15.32px;color:#d6d6d6;-webkit-text-stroke:0.25px #d6d6d6">Участники</div>
<div class="a nw" style="left:481.7px;top:42.5px;font-size:15.1px;color:#d6d6d6;-webkit-text-stroke:0.25px #d6d6d6">Вопросы и ответы</div>
<div class="a nw" style="left:663.5px;top:42.5px;font-size:14.17px;color:#d6d6d6;-webkit-text-stroke:0.25px #d6d6d6">Чат</div>
<div class="a nw" style="left:741.9px;top:42.5px;font-size:15.32px;color:#2bd15f;-webkit-text-stroke:0.25px #2bd15f">Демонстрация экрана</div>
<div class="a nw" style="left:934.2px;top:42.5px;font-size:14.81px;color:#d6d6d6;-webkit-text-stroke:0.25px #d6d6d6">Запись</div>
<div class="a nw" style="left:1029.7px;top:42.5px;font-size:15.01px;color:#d6d6d6;-webkit-text-stroke:0.25px #d6d6d6">Реакции</div>
<div class="a nw" style="left:1119.4px;top:42.5px;font-size:15.63px;color:#d6d6d6;-webkit-text-stroke:0.25px #d6d6d6">Поднять руку</div>
<div class="a nw" style="left:1236.7px;top:42.5px;font-size:15.52px;color:#d6d6d6;-webkit-text-stroke:0.25px #d6d6d6">Приложения</div>
<div class="a nw" style="left:1348.3px;top:42.5px;font-size:15.68px;color:#d6d6d6;-webkit-text-stroke:0.25px #d6d6d6">Доски сообщений</div>
<div class="a nw" style="left:1504.4px;top:42.5px;font-size:15.59px;color:#d6d6d6;-webkit-text-stroke:0.25px #d6d6d6">Примечания</div>
<div class="a nw" style="left:1621.4px;top:42.5px;font-size:15.44px;color:#d6d6d6;-webkit-text-stroke:0.25px #d6d6d6">Дополнительно</div>
<svg class="a" style="left:98.3px;top:19px" width="10" height="6" viewBox="0 0 10 6"><path d="M1 5.2L5 1.2l4 4" stroke="#c8c8c8" stroke-width="1.6" fill="none"/></svg>
<svg class="a" style="left:246px;top:19px" width="10" height="6" viewBox="0 0 10 6"><path d="M1 5.2L5 1.2l4 4" stroke="#c8c8c8" stroke-width="1.6" fill="none"/></svg>
<svg class="a" style="left:450px;top:19px" width="10" height="6" viewBox="0 0 10 6"><path d="M1 5.2L5 1.2l4 4" stroke="#c8c8c8" stroke-width="1.6" fill="none"/></svg>
<svg class="a" style="left:711px;top:19px" width="10" height="6" viewBox="0 0 10 6"><path d="M1 5.2L5 1.2l4 4" stroke="#c8c8c8" stroke-width="1.6" fill="none"/></svg>
<svg class="a" style="left:1088px;top:19px" width="10" height="6" viewBox="0 0 10 6"><path d="M1 5.2L5 1.2l4 4" stroke="#c8c8c8" stroke-width="1.6" fill="none"/></svg>
<svg class="a" style="left:1205px;top:19px" width="10" height="6" viewBox="0 0 10 6"><path d="M1 5.2L5 1.2l4 4" stroke="#c8c8c8" stroke-width="1.6" fill="none"/></svg>
<svg class="a" style="left:40px;top:6px" width="32" height="32" viewBox="0 0 32 32"><rect x="11" y="2" width="10" height="17.5" rx="5" fill="#bdbdbd"/><path d="M7.5 14a8.5 8.5 0 0 0 17 0M16 22.5v6M11 29h10" stroke="#bdbdbd" stroke-width="1.8" fill="none"/><path d="M1.5 30L30 2" stroke="#e9474f" stroke-width="2"/></svg>
<svg class="a" style="left:177px;top:12px" width="32" height="20" viewBox="0 0 32 20"><rect x="1" y="0.5" width="21.5" height="18.5" rx="4" fill="#bdbdbd"/><path d="M23.5 6.5l7-5.5v17.5l-7-5.5z" fill="#bdbdbd" stroke="#bdbdbd" stroke-width="1" stroke-linejoin="round"/></svg>
<svg class="a" style="left:373px;top:11px" width="32" height="23" viewBox="0 0 32 23"><circle cx="9" cy="5.5" r="5" fill="#bdbdbd"/><path d="M0 19c0-5 4-7.5 9-7.5s9 2.5 9 7.5v1.5a2 2 0 0 1-2 2H2a2 2 0 0 1-2-2z" fill="#bdbdbd"/><circle cx="22.5" cy="8.5" r="4.2" fill="#bdbdbd"/><path d="M15 22.5c0-4 3-7 7.5-7s7.5 3 7.5 7v0z" fill="#bdbdbd"/></svg>
<div class="a nw" style="left:410px;top:12px;font-size:15px;color:#d0d0d0;-webkit-text-stroke:0.2px #d0d0d0">26</div>
<svg class="a" style="left:529px;top:10.5px" width="32" height="23" viewBox="0 0 32 23"><path d="M12 1h17a2 2 0 0 1 2 2v10a2 2 0 0 1-2 2h-1v4l-4-4" fill="#bdbdbd"/><rect x="1" y="6" width="19" height="12" rx="4" fill="#bdbdbd" stroke="#1a1a1a" stroke-width="1.5"/><path d="M5 17.5v5l5-5z" fill="#bdbdbd"/></svg>
<svg class="a" style="left:662px;top:11px" width="27" height="23" viewBox="0 0 27 23"><rect x="0.5" y="0.5" width="26" height="15" rx="6" fill="#bdbdbd"/><path d="M5 14v8.5l7-8z" fill="#bdbdbd"/></svg>
<div class="a" style="left:679px;top:3.5px;width:28px;height:18px;border-radius:6px;background:#e5323d;color:#fff;font-size:13.5px;font-weight:bold;text-align:center;line-height:18px">22</div>
<div class="a" style="left:805px;top:10.700000000000045px;width:30.5px;height:22.3px;border-radius:3px;background:#23d160"></div>
<svg class="a" style="left:813px;top:14px" width="14" height="16" viewBox="0 0 14 16"><path d="M7 14V3M2.5 7.5L7 3l4.5 4.5" stroke="#111" stroke-width="2.3" fill="none"/></svg>
<div class="a" style="left:946.7px;top:9.399999999999977px;width:25px;height:25px;border-radius:50%;border:1.8px solid #bdbdbd;background:#1a1a1a"></div>
<div class="a" style="left:949.7px;top:12.399999999999977px;width:19px;height:19px;border-radius:50%;background:#bdbdbd"></div>
<svg class="a" style="left:1046px;top:7px" width="30" height="28" viewBox="0 0 30 28"><circle cx="12.5" cy="16" r="11" fill="#bdbdbd"/><circle cx="9" cy="13.5" r="1.6" fill="#1a1a1a"/><circle cx="16" cy="13.5" r="1.6" fill="#1a1a1a"/><path d="M7.5 18c2.5 3 7.5 3 10 0" stroke="#1a1a1a" stroke-width="1.8" fill="none"/><circle cx="22" cy="6" r="6" fill="#1a1a1a"/><path d="M22 1v9M17.5 5.5h9" stroke="#bdbdbd" stroke-width="1.6"/></svg>
<svg class="a" style="left:1156px;top:9px" width="23" height="27" viewBox="0 0 23 27"><path d="M4 15V5a1.5 1.5 0 0 1 3 0v7V2.5a1.5 1.5 0 0 1 3 0V12V3a1.5 1.5 0 0 1 3 0v9V6a1.5 1.5 0 0 1 3 0v11l2.5-3.5a1.8 1.8 0 0 1 3 2L17 24c-1.5 2-3 2.5-5 2.5H9c-3 0-5-2.5-5-6z" fill="#bdbdbd"/></svg>
<svg class="a" style="left:1271px;top:12.5px" width="23" height="22" viewBox="0 0 23 22"><path d="M2 11V5a3 3 0 0 1 3-3h6M21 11v6a3 3 0 0 1-3 3h-6" stroke="#bdbdbd" stroke-width="2" fill="none"/><circle cx="17" cy="4" r="2.6" stroke="#bdbdbd" stroke-width="1.8" fill="none"/><circle cx="5" cy="17.5" r="2.6" stroke="#bdbdbd" stroke-width="1.8" fill="none"/></svg>
<svg class="a" style="left:1399px;top:10px" width="28" height="23" viewBox="0 0 28 23"><path d="M4 19H3a2 2 0 0 1-2-2V3a2 2 0 0 1 2-2h20a2 2 0 0 1 2 2v12" stroke="#bdbdbd" stroke-width="2" fill="none"/><rect x="9" y="16" width="18" height="5.5" rx="2.5" fill="#bdbdbd"/></svg>
<svg class="a" style="left:1538px;top:10px" width="24" height="26" viewBox="0 0 24 26"><rect x="3" y="1" width="16.5" height="22" rx="3" stroke="#bdbdbd" stroke-width="1.8" fill="none"/><path d="M7 6h9M7 9.5h9M7 13h5" stroke="#bdbdbd" stroke-width="1.6"/><path d="M1 5h3M1 8h3M1 11h3M1 14h3M1 17h3" stroke="#bdbdbd" stroke-width="1.2"/><rect x="10" y="20" width="13" height="5.5" rx="2.7" fill="#bdbdbd"/></svg>
<svg class="a" style="left:1664px;top:19px" width="26" height="6" viewBox="0 0 26 6"><circle cx="3" cy="3" r="2.8" fill="#bdbdbd"/><circle cx="13" cy="3" r="2.8" fill="#bdbdbd"/><circle cx="23" cy="3" r="2.8" fill="#bdbdbd"/></svg></div>
<div class="a" style="left:0;top:1022px;width:1793px;height:5px;background:#e9ede9"></div>
</body></html>
